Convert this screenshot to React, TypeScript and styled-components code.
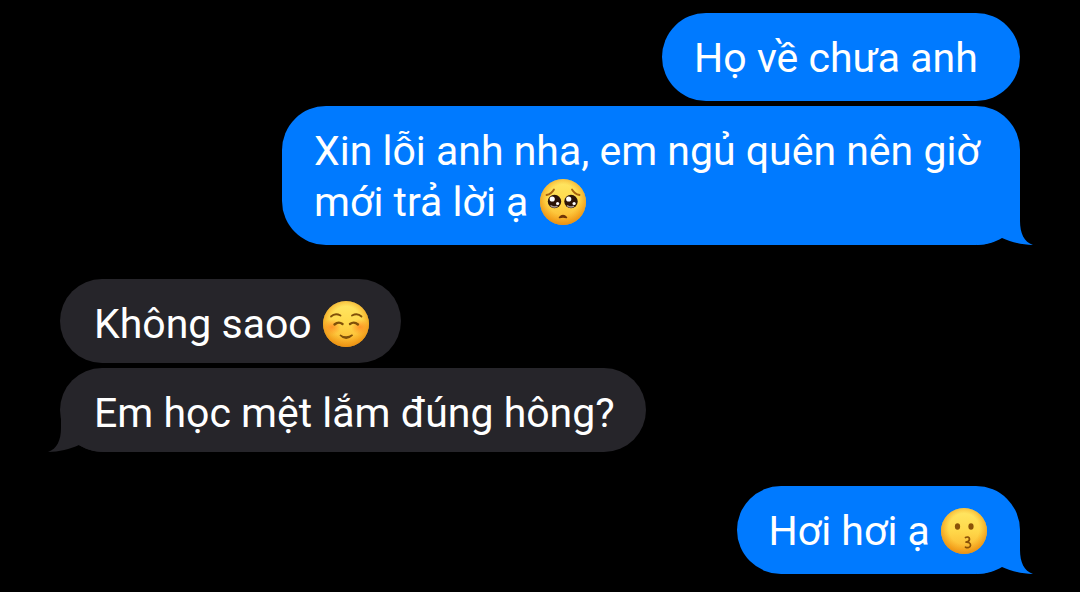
import React from "react";
import styled, { createGlobalStyle } from "styled-components";

const GlobalStyle = createGlobalStyle`
  * { box-sizing: border-box; }
  body {
    margin: 0;
    background: #000;
    color: #fff;
    font-family: Roboto, "Liberation Sans", sans-serif;
    -webkit-font-smoothing: antialiased;
  }
`;

type Side = "sent" | "received";

const Conversation = styled.main`
  display: flex;
  flex-direction: column;
  gap: 34px;
  padding: 13px 60px 18px;
`;

const MessageGroup = styled.section<{ $side: Side }>`
  display: flex;
  flex-direction: column;
  align-items: ${(p) => (p.$side === "sent" ? "flex-end" : "flex-start")};
  gap: 5px;
`;

const Bubble = styled.div<{ $side: Side }>`
  position: relative;
  isolation: isolate;
  max-width: 738px;
  padding: ${(p) => (p.$side === "sent" ? "20px 32px 17px" : "20px 31px 13px 34px")};
  border-radius: ${(p) => (p.$side === "sent" ? "44px" : "42px")};
  background: ${(p) => (p.$side === "sent" ? "#007aff" : "#26252a")};
  color: #fff;
`;

const Text = styled.p`
  margin: 0;
  font-size: 41px;
  line-height: 51px;
`;

const Tail = styled.svg<{ $side: Side }>`
  position: absolute;
  z-index: -1;
  bottom: 0;
  ${(p) => (p.$side === "sent" ? "right: -13px;" : "left: -12px; transform: scaleX(-1);")}
  width: 56px;
  height: 44px;
  fill: ${(p) => (p.$side === "sent" ? "#007aff" : "#26252a")};
`;

const EmojiIcon = styled.svg`
  display: inline-block;
  width: 48px;
  height: 48px;
  margin: -4px 0 -1px;
  vertical-align: -9px;
`;

function BubbleTail({ side }: { side: Side }) {
  return (
    <Tail $side={side} viewBox="0 0 56 44" aria-hidden="true">
      <path d="M0 0H43V20C43 32 47 41 56 44C45 44 34 41 25 37C18 41 10 44 0 44Z" />
    </Tail>
  );
}

type EmojiName = "pleading" | "smiling" | "kissing";

function Face({ name }: { name: EmojiName }) {
  const base = `${name}-base`;
  const glow = `${name}-glow`;
  const blush = `${name}-blush`;
  return (
    <>
      <defs>
        <linearGradient id={base} x1="0" y1="0" x2="0" y2="1">
          <stop offset="0" stopColor="#ffe866" />
          <stop offset="0.5" stopColor="#ffd84a" />
          <stop offset="1" stopColor="#fbb22c" />
        </linearGradient>
        <radialGradient id={glow} cx="0.5" cy="0.45" r="0.55">
          <stop offset="0.6" stopColor="#f39a12" stopOpacity="0" />
          <stop offset="1" stopColor="#e8890c" stopOpacity="0.85" />
        </radialGradient>
        <radialGradient id={blush}>
          <stop offset="0" stopColor="#ff7417" stopOpacity="0.65" />
          <stop offset="1" stopColor="#ff7417" stopOpacity="0" />
        </radialGradient>
      </defs>
      <circle cx="24" cy="24" r="23" fill={`url(#${base})`} />
      <circle cx="24" cy="24" r="23" fill={`url(#${glow})`} />
      {name === "smiling" && (
        <>
          <ellipse cx="10" cy="27" rx="9" ry="8" fill={`url(#${blush})`} />
          <ellipse cx="38" cy="27" rx="9" ry="8" fill={`url(#${blush})`} />
        </>
      )}
    </>
  );
}

function Emoji({ name, label }: { name: EmojiName; label: string }) {
  return (
    <EmojiIcon viewBox="0 0 48 48" role="img" aria-label={label}>
      <Face name={name} />
      {name === "pleading" && (
        <>
          <g fill="none" stroke="#a8620e" strokeWidth="1.8" strokeLinecap="round">
            <path d="M7.5 17Q12.5 16 15 11.5" />
            <path d="M40.5 17Q35.5 16 33 11.5" />
          </g>
          <circle cx="15.5" cy="23.5" r="6.7" fill="#2c1408" />
          <circle cx="32" cy="23.5" r="6.7" fill="#2c1408" />
          <g fill="#fff">
            <circle cx="13.2" cy="21" r="2.6" />
            <circle cx="29.7" cy="21" r="2.6" />
            <circle cx="18.6" cy="25.5" r="1.6" />
            <circle cx="35.1" cy="25.5" r="1.6" />
          </g>
          <g fill="none" stroke="#a59a96" strokeWidth="1.5" strokeLinecap="round">
            <path d="M12 27.8Q15 29.6 18 28.4" />
            <path d="M28.5 27.8Q31.5 29.6 34.5 28.4" />
          </g>
          <path d="M20.5 39.5Q24 35.5 27.5 39.5Q24 38.5 20.5 39.5Z" fill="#713506" stroke="#713506" strokeWidth="1.5" strokeLinejoin="round" />
        </>
      )}
      {name === "smiling" && (
        <g fill="none" stroke="#805009" strokeWidth="2.4" strokeLinecap="round">
          <path d="M9 16.5Q13 12.5 18.5 15.5" strokeWidth="1.8" />
          <path d="M30 15.5Q35.5 12.5 39.5 16.5" strokeWidth="1.8" />
          <path d="M12.5 24.5Q16.5 21 20.5 24" />
          <path d="M28 24Q32 21 36 24.5" />
          <path d="M18 35Q24 41.5 30.5 35Q24 39 18 35Z" fill="#805009" strokeWidth="1.5" />
        </g>
      )}
      {name === "kissing" && (
        <>
          <ellipse cx="17.5" cy="19.5" rx="2.6" ry="3.2" fill="#8a5208" />
          <ellipse cx="31" cy="19.5" rx="2.6" ry="3.2" fill="#8a5208" />
          <path
            d="M25.5 30.5C27 29.5 29.5 30 29.5 32C29.5 34 27.5 35 26 35.2C28.5 35 30.8 36.2 30.5 38.5C30.2 40.7 27.5 41.2 25.5 40.2"
            fill="none"
            stroke="#8a5208"
            strokeWidth="1.7"
            strokeLinecap="round"
            strokeLinejoin="round"
          />
        </>
      )}
    </EmojiIcon>
  );
}

interface MessageProps {
  side: Side;
  tail?: boolean;
  children: React.ReactNode;
}

function Message({ side, tail, children }: MessageProps) {
  return (
    <Bubble $side={side}>
      {tail && <BubbleTail side={side} />}
      <Text>{children}</Text>
    </Bubble>
  );
}

export default function App() {
  return (
    <>
      <GlobalStyle />
      <Conversation lang="vi">
        <MessageGroup $side="sent">
          <Message side="sent">Họ về chưa anh&nbsp;</Message>
          <Message side="sent" tail>
            Xin lỗi anh nha, em ngủ quên nên giờ mới trả lời ạ <Emoji name="pleading" label="Mặt cầu xin" />
          </Message>
        </MessageGroup>
        <MessageGroup $side="received">
          <Message side="received">
            Không saoo <Emoji name="smiling" label="Mặt mỉm cười" />
          </Message>
          <Message side="received" tail>
            Em học mệt lắm đúng hông?
          </Message>
        </MessageGroup>
        <MessageGroup $side="sent">
          <Message side="sent" tail>
            Hơi hơi ạ <Emoji name="kissing" label="Mặt hôn" />
          </Message>
        </MessageGroup>
      </Conversation>
    </>
  );
}
